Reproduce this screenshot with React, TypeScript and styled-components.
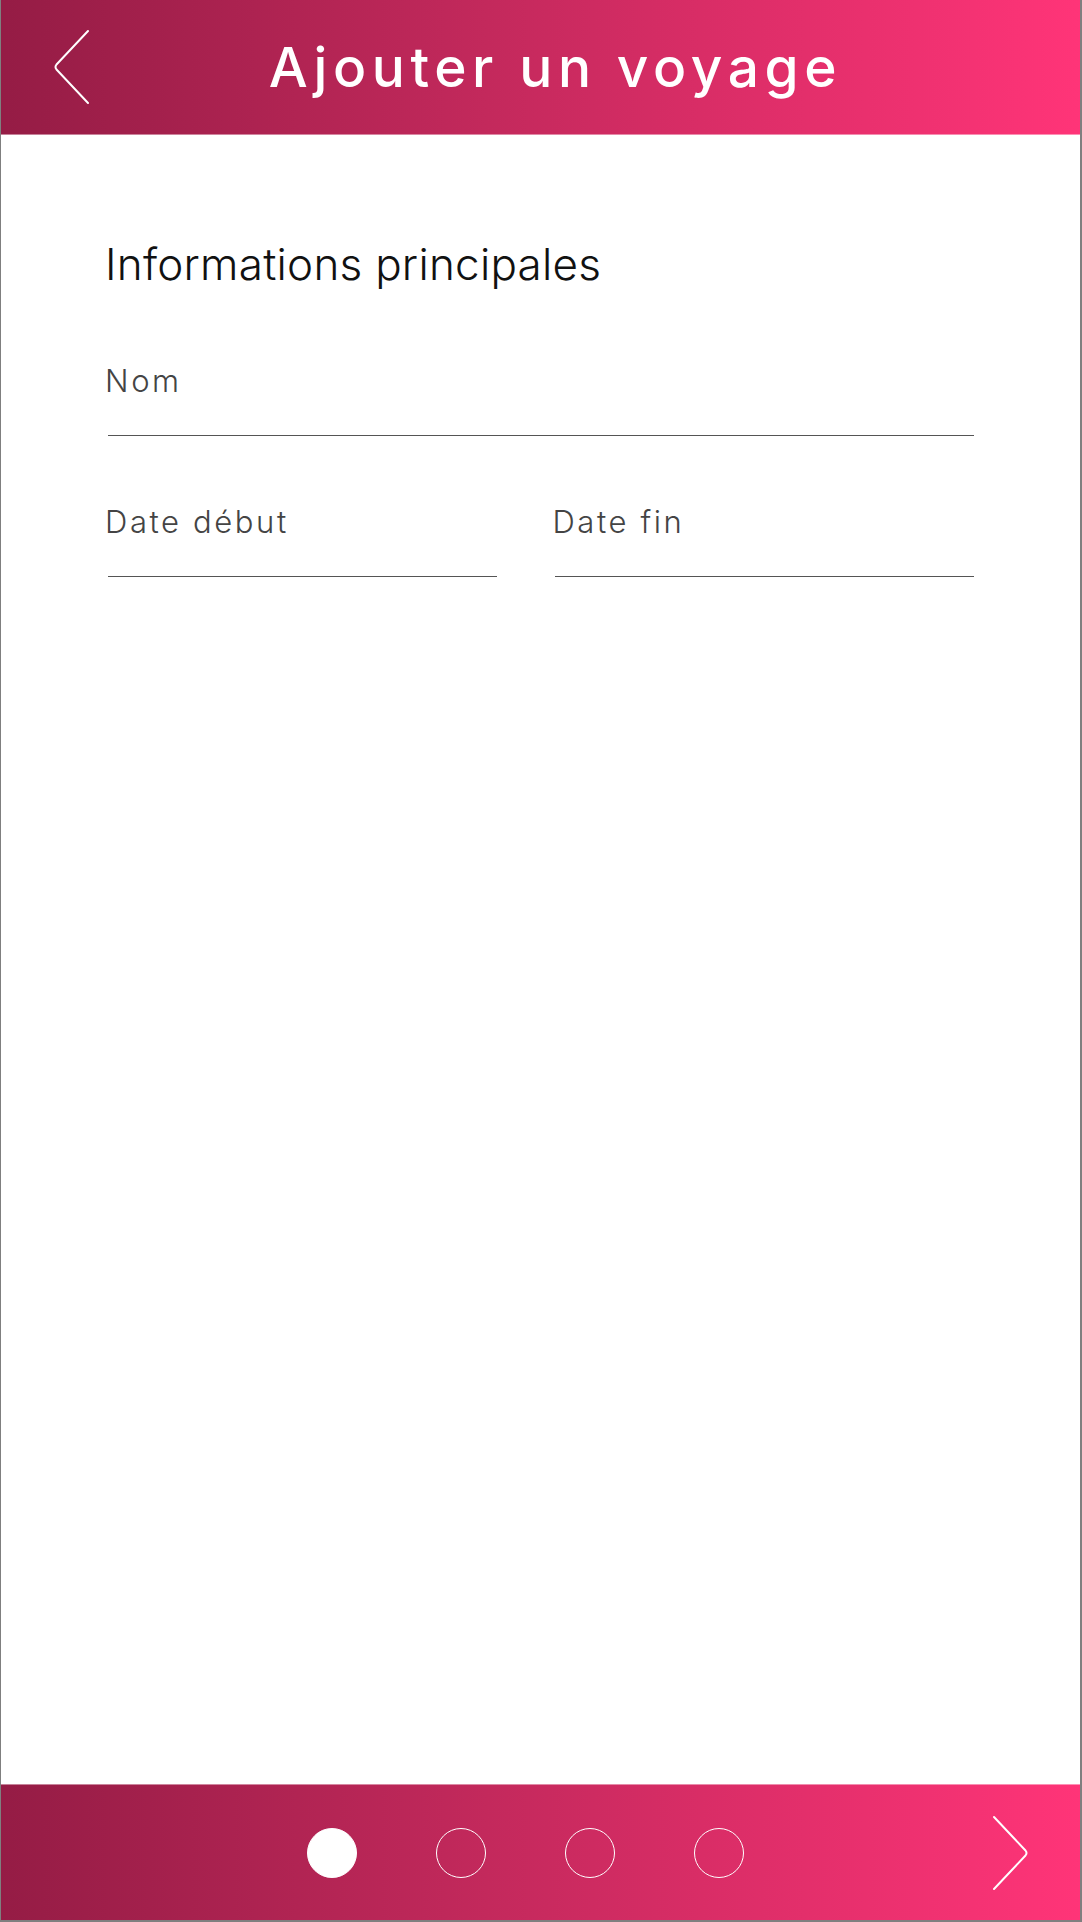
import React from 'react';
import styled, { createGlobalStyle } from 'styled-components';

const GlobalStyle = createGlobalStyle`
  html, body {
    margin: 0;
    padding: 0;
    background: #ffffff;
  }
  body {
    font-family: Inter, "Open Sans", sans-serif;
  }
  * {
    box-sizing: border-box;
  }
`;

const brandGradient = 'linear-gradient(90deg, #951c45 0%, #c3295c 45%, #ff3478 100%)';

// ================ LAYOUT ================
const Frame = styled.div`
  width: 1082px;
  height: 1922px;
  display: flex;
  flex-direction: column;
  border-style: solid;
  border-color: #7f7f7f;
  border-width: 0 2px 2px 1px;
  background: #ffffff;
`;

const Header = styled.header`
  height: 135px;
  flex-shrink: 0;
  display: grid;
  grid-template-columns: 110px 1fr 80px;
  align-items: center;
  background: ${brandGradient};
  border-bottom: 1px solid rgba(255, 255, 255, 0.45);
`;

const NavButton = styled.button<{ $side: 'left' | 'right' }>`
  display: flex;
  align-items: center;
  justify-content: ${p => (p.$side === 'left' ? 'flex-start' : 'flex-end')};
  padding: 0;
  padding-left: ${p => (p.$side === 'left' ? '52px' : '0')};
  padding-right: ${p => (p.$side === 'right' ? '51px' : '0')};
  border: none;
  background: transparent;
  cursor: pointer;
  height: 100%;

  svg {
    display: block;
  }
`;

const Title = styled.h1`
  margin: 0;
  text-align: center;
  color: #ffffff;
  font-family: Inter, "Open Sans", sans-serif;
  font-size: 55px;
  font-weight: 500;
  letter-spacing: 5.6px;
  line-height: 64px;
`;

const Main = styled.main`
  flex: 1;
  padding: 103px 107px 0 106px;
`;

const SectionTitle = styled.h2`
  margin: 0 0 73px -2px;
  font-family: Inter, "Open Sans", sans-serif;
  font-size: 44px;
  font-weight: 300;
  line-height: 52px;
  color: #111111;
  letter-spacing: 0.25px;
`;

const Row = styled.div`
  display: grid;
  grid-template-columns: minmax(0, 389fr) minmax(0, 418fr);
  column-gap: 58px;
  margin-top: 68px;
`;

const Field = styled.label`
  display: flex;
  flex-direction: column;
  min-width: 0;
`;

const FieldLabel = styled.span`
  margin-left: -2px;
  font-family: Inter, "Open Sans", sans-serif;
  font-size: 31px;
  font-weight: 300;
  line-height: 36px;
  color: #444444;
  letter-spacing: 2.6px;
`;

const FieldInput = styled.input`
  width: 100%;
  min-width: 0;
  height: 37px;
  margin-left: 1px;
  padding: 0;
  border: none;
  border-bottom: 1px solid #555555;
  background: transparent;
  outline: none;
  font-family: inherit;
  font-size: 28px;
`;

const Footer = styled.footer`
  height: 136px;
  flex-shrink: 0;
  display: flex;
  align-items: center;
  background: ${brandGradient};
  border-top: 1px solid rgba(255, 255, 255, 0.45);
`;

const Dots = styled.div`
  flex: 1;
  display: flex;
  justify-content: center;
  gap: 79px;
  padding-left: 56px;
`;

const Dot = styled.span<{ $active?: boolean }>`
  width: 50px;
  height: 50px;
  border-radius: 50%;
  border: 1.5px solid #ffffff;
  background: ${p => (p.$active ? '#ffffff' : 'transparent')};
`;

// ================ ICONS ================
const ChevronLeft = () => (
  <svg width="36" height="76" viewBox="0 0 36 76" fill="none">
    <path
      d="M35 2 L3.5 35.5 Q1.5 38 3.5 40.5 L35 74"
      stroke="#ffffff"
      strokeWidth="2"
      strokeLinecap="round"
      strokeLinejoin="round"
    />
  </svg>
);

const ChevronRight = () => (
  <svg width="36" height="76" viewBox="0 0 36 76" fill="none">
    <path
      d="M1 2 L32.5 35.5 Q34.5 38 32.5 40.5 L1 74"
      stroke="#ffffff"
      strokeWidth="2"
      strokeLinecap="round"
      strokeLinejoin="round"
    />
  </svg>
);

const steps = [true, false, false, false];

export default function App() {
  return (
    <>
      <GlobalStyle />
      <Frame>
        <Header>
          <NavButton $side="left" aria-label="Retour">
            <ChevronLeft />
          </NavButton>
          <Title>Ajouter un voyage</Title>
          <span />
        </Header>

        <Main>
          <SectionTitle>Informations principales</SectionTitle>

          <Field>
            <FieldLabel>Nom</FieldLabel>
            <FieldInput type="text" />
          </Field>

          <Row>
            <Field>
              <FieldLabel>Date début</FieldLabel>
              <FieldInput type="text" />
            </Field>
            <Field>
              <FieldLabel>Date fin</FieldLabel>
              <FieldInput type="text" />
            </Field>
          </Row>
        </Main>

        <Footer>
          <Dots>
            {steps.map((active, i) => (
              <Dot key={i} $active={active} />
            ))}
          </Dots>
          <NavButton $side="right" aria-label="Suivant">
            <ChevronRight />
          </NavButton>
        </Footer>
      </Frame>
    </>
  );
}
